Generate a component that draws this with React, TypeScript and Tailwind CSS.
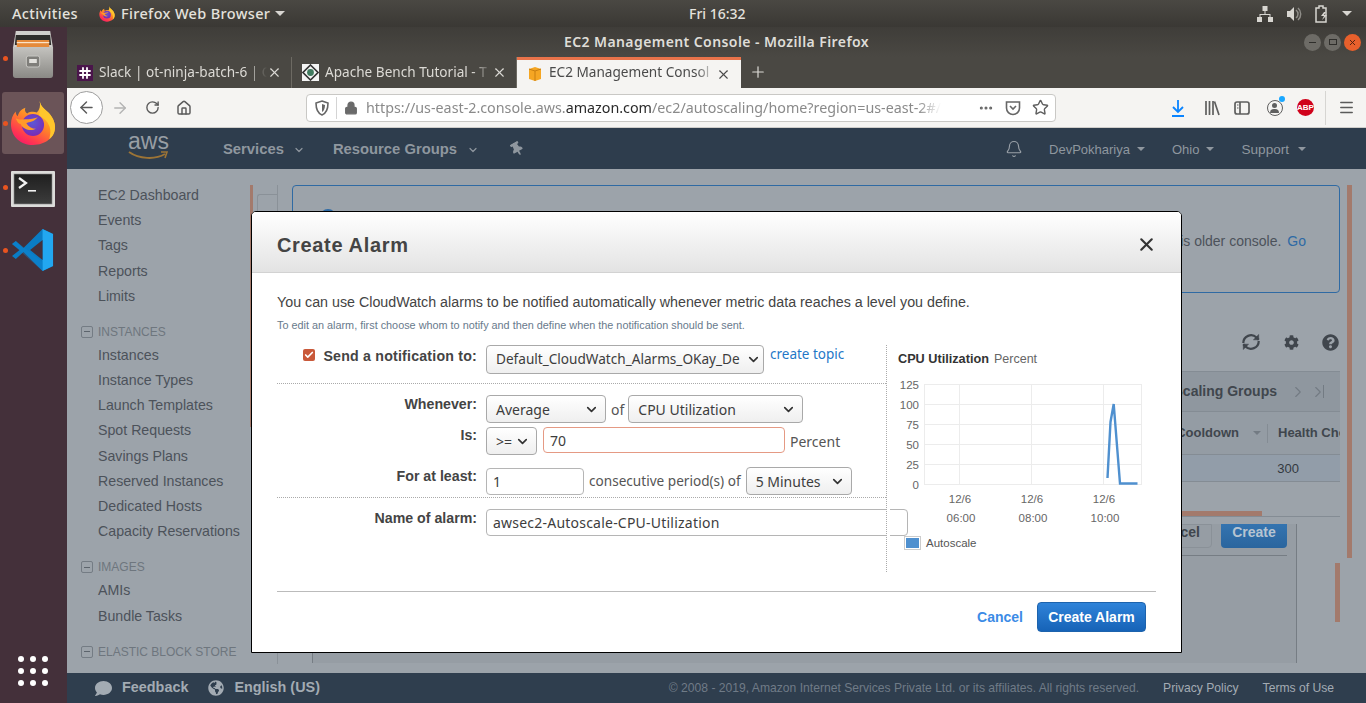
import { ArrowLeft, ArrowRight, RotateCw, House, Star, Ellipsis, Menu, Bell, X, Plus, Lock, ChevronDown, ChevronRight, Check } from 'lucide-react'
import { FaCog, FaQuestionCircle, FaGlobeAmericas, FaComment, FaThumbtack } from 'react-icons/fa'

const ubuntu = "font-['Noto_Sans',sans-serif]"
const arial = "font-['Liberation_Sans',Arial,sans-serif]"

const FirefoxLogo = ({ size }: { size: number }) => (
  <svg width={size} height={size} viewBox="0 0 48 48">
    <defs>
      <linearGradient id="ffa" x1="0.8" y1="0" x2="0.2" y2="1">
        <stop offset="0" stopColor="#ffdf3f" />
        <stop offset="0.45" stopColor="#ff8a25" />
        <stop offset="0.8" stopColor="#ff3850" />
        <stop offset="1" stopColor="#f5156c" />
      </linearGradient>
      <radialGradient id="ffb" cx="0.5" cy="0.4" r="0.6">
        <stop offset="0" stopColor="#5b58d6" />
        <stop offset="1" stopColor="#7a2bb5" />
      </radialGradient>
    </defs>
    <path d="M31 1c1 6 5 8 9 12 4 4 7 10 7 15 0 11-10 19-23 19S1 38 1 25c0-5 2-10 5-13 0 3 1 4 2 5 1-4 3-7 8-9-1 3 0 5 2 6 3-2 7-2 10-1 3-3 4-7 3-12z" fill="url(#ffa)" />
    <path d="M31 1c1 6 5 8 9 12 4 4 7 10 7 15 0 6-2 10-6 13 1-5 2-9 0-14-2-5-6-8-11-11 2-4 2-9 1-15z" fill="#ffc62c" />
    <circle cx="24" cy="26" r="11.5" fill="url(#ffb)" />
    <path d="M6 19c3 2 9 1 13 1 4 0 7-1 10-2-4 5-9 5-12 6 2 4 6 6 10 6-5 3-13 1-16-5-2 0-4-3-5-6z" fill="#ff9a2a" />
  </svg>
)

const FilesIcon = () => (
  <svg width="42" height="50" viewBox="0 0 44 50" preserveAspectRatio="none">
    <defs>
      <linearGradient id="fi" x1="0" y1="0" x2="0" y2="1">
        <stop offset="0" stopColor="#c4c3bf" />
        <stop offset="1" stopColor="#8a8985" />
      </linearGradient>
    </defs>
    <path d="M4 1h36l3 17H1z" fill="#cfcecb" />
    <path d="M4 5h36l1 10H3z" fill="#2e2d2b" />
    <rect x="5" y="10" width="34" height="7" fill="#e58a3a" />
    <rect x="5" y="12" width="34" height="1.2" fill="#fbe3c8" />
    <path d="M1 17h42v28a3 3 0 0 1-3 3H4a3 3 0 0 1-3-3z" fill="url(#fi)" />
    <rect x="15" y="26" width="14" height="11" rx="2" fill="#7f7e7a" stroke="#c9c8c4" />
    <rect x="18" y="29" width="8" height="4" fill="#e2e1dd" />
  </svg>
)

const TerminalIcon = () => (
  <svg width="44" height="36" viewBox="0 0 44 36">
    <defs>
      <linearGradient id="tm" x1="0" y1="0" x2="0" y2="1">
        <stop offset="0" stopColor="#1f1f1f" />
        <stop offset="1" stopColor="#3c3c3c" />
      </linearGradient>
    </defs>
    <rect width="44" height="36" rx="1" fill="#dcdcda" />
    <rect x="3" y="3" width="38" height="30" fill="url(#tm)" stroke="#8a8a8a" strokeWidth="0.6" />
    <path d="M8 7l7 5-7 5" fill="none" stroke="#f2f2f2" strokeWidth="2.2" />
    <rect x="17" y="19" width="8" height="1.6" fill="#f2f2f2" />
  </svg>
)

const VsCodeIcon = () => (
  <svg width="42" height="42" viewBox="0 0 44 42" preserveAspectRatio="none">
    <path d="M32 0l11 5v32l-11 5L12 23 4 30 0 27l8-6-8-6 4-3 8 7z" fill="#0a7cc4" />
    <path d="M32 0l11 5v32l-11 5z" fill="#22a7f0" />
    <path d="M32 11L19 21l13 10z" fill="#44303a" />
    <path d="M4 12l28 21v9L0 15z" fill="#0f8ad6" opacity="0.35" />
  </svg>
)

const SlackFav = () => (
  <svg width="16" height="16" viewBox="0 0 16 16" className="shrink-0">
    <rect width="16" height="16" fill="#4a154b" />
    <path d="M6 3v10M10 3v10M3 6h10M3 10h10" stroke="#fff" strokeWidth="1.8" strokeLinecap="round" />
  </svg>
)

const ApacheFav = () => (
  <svg width="17" height="17" viewBox="0 0 17 17" className="shrink-0">
    <rect width="17" height="17" fill="#f4f4f4" />
    <path d="M8.5 1L16 8.5 8.5 16 1 8.5z" fill="none" stroke="#333" strokeWidth="1.6" />
    <circle cx="8.5" cy="8.5" r="3.4" fill="#3f7a5e" />
  </svg>
)

const AwsFav = () => (
  <svg width="16" height="16" viewBox="0 0 16 16" className="shrink-0">
    <path d="M8 1l6 2v10l-6 2-6-2V3z" fill="#f5a623" />
    <path d="M2 3l6 2 6-2M8 5v10" stroke="#c97f10" strokeWidth="1" fill="none" />
  </svg>
)

const Tab = ({ icon, title, active }: { icon: React.ReactNode; title: string; active?: boolean }) => (
  <div className={active ? 'flex h-[31px] w-[224px] items-center border-t-[3px] border-[#e9734a] bg-[#f5f4f2] pl-[10px] pr-[10px] text-[#4a4a4a]' : 'flex h-[31px] w-[225px] items-center border-r border-[#6d6a63] pl-[10px] pr-[9px] text-[#dcdad5]'}>
    {icon}
    <span className={`${active ? 'mb-[3px]' : 'mb-[1px]'} ml-[6px] w-[168px] whitespace-nowrap text-[13.6px] [mask-image:linear-gradient(to_right,black_88%,transparent)]`}>{title}</span>
    <X size={15} className="ml-auto shrink-0" strokeWidth={1.8} />
  </div>
)

const DockDot = ({ top }: { top: number }) => (
  <span className="absolute left-[3px] h-[5px] w-[5px] rounded-full bg-[#e95420]" style={{ top }} />
)

const Dock = () => (
  <aside className="relative flex w-[67px] shrink-0 flex-col bg-[#44303a]">
    <DockDot top={29} />
    <DockDot top={94} />
    <DockDot top={158} />
    <DockDot top={221} />
    <div className="ml-[12px] mt-[3px]"><FilesIcon /></div>
    <div className="ml-[2px] mt-[12px] flex h-[62px] w-[62px] items-center justify-center rounded-[3px] bg-[#6b5458]"><FirefoxLogo size={46} /></div>
    <div className="ml-[11px] mt-[17px]"><TerminalIcon /></div>
    <div className="ml-[12px] mt-[22px]"><VsCodeIcon /></div>
    <div className="mb-[17px] ml-[18px] mt-auto grid w-[30px] grid-cols-3 gap-x-[6px] gap-y-[6px]">
      {Array.from({ length: 9 }).map((_, i) => <span key={i} className="h-[6px] w-[6px] rounded-full bg-white" />)}
    </div>
  </aside>
)

const TopBar = () => (
  <header className={`${ubuntu} relative flex h-[27px] shrink-0 items-center bg-gradient-to-b from-[#4a4843] to-[#3a3834] text-[14.5px] font-medium tracking-[0.35px] text-[#e4e2dd]`}>
    <span className="ml-[12px]">Activities</span>
    <span className="ml-[21px]"><FirefoxLogo size={16} /></span>
    <span className="ml-[6px]">Firefox Web Browser</span>
    <span className="ml-[5px] h-0 w-0 border-x-[5px] border-t-[5px] border-x-transparent border-t-[#d8d6d1]" />
    <span className="absolute left-[689px] text-[14px] tracking-normal">Fri 16:32</span>
    <div className="ml-auto mr-[14px] flex items-center">
      <svg width="16" height="16" viewBox="0 0 16 16" fill="#d8d6d1"><rect x="5.5" y="0" width="5" height="5" /><rect x="0" y="11" width="5" height="5" /><rect x="11" y="11" width="5" height="5" /><path d="M7.5 5h1v3h5v3h-1V9h-9v2h-1V8h5z" /></svg>
      <svg width="16" height="16" viewBox="0 0 16 16" fill="#d8d6d1" className="ml-[13px]"><path d="M1 5h3l4-4v14l-4-4H1z" /><path d="M10 4a5 5 0 0 1 0 8M12 2a8 8 0 0 1 0 12" fill="none" stroke="#8f8d88" strokeWidth="1.5" /></svg>
      <svg width="14" height="18" viewBox="0 0 14 18" fill="none" className="ml-[13px]"><path d="M1 3h3V1h4v2h3v14H1z" stroke="#d8d6d1" strokeWidth="1.5" /><path d="M9 7l-3 4h3l-2 4 5-5H9l2-3z" fill="#d8d6d1" /></svg>
      <span className="ml-[13px] h-0 w-0 border-x-[5px] border-t-[5px] border-x-transparent border-t-[#d8d6d1]" />
    </div>
  </header>
)

const TitleBar = () => (
  <div className={`${ubuntu} relative flex h-[30px] shrink-0 items-center justify-center bg-gradient-to-b from-[#3f3d39] to-[#4a4843] text-[14px] font-semibold tracking-[0.42px] text-[#dfddd8]`}>
    <span className="mb-[2px]">EC2 Management Console - Mozilla Firefox</span>
    <div className="absolute right-[5px] flex gap-[3px]">
      <span className="flex h-[17px] w-[17px] items-center justify-center rounded-full bg-[#6d6b66]"><span className="h-[1px] w-[7px] bg-[#2f2e2b]" /></span>
      <span className="flex h-[17px] w-[17px] items-center justify-center rounded-full bg-[#6d6b66]"><span className="h-[6px] w-[8px] border border-[#2f2e2b]" /></span>
      <span className="flex h-[17px] w-[17px] items-center justify-center rounded-full bg-[#e8602c]"><X size={9} className="text-[#4a2010]" strokeWidth={2.5} /></span>
    </div>
  </div>
)

const TabBar = () => (
  <div className={`${ubuntu} flex h-[31px] shrink-0 items-end bg-[#4a4843]`}>
    <Tab icon={<SlackFav />} title="Slack | ot-ninja-batch-6 | O" />
    <Tab icon={<ApacheFav />} title="Apache Bench Tutorial - T" />
    <Tab icon={<AwsFav />} title="EC2 Management Consol" active />
    <Plus size={18} strokeWidth={1.6} className="mb-[7px] ml-[8px] text-[#dcdad5]" />
  </div>
)

const Toolbar = () => (
  <div className={`${ubuntu} flex h-[40px] shrink-0 items-center border-b border-[#cfcdca] bg-[#f5f4f2] text-[#5a5a5a]`}>
    <div className="ml-[3px] flex h-[33px] w-[33px] items-center justify-center rounded-full border border-[#9d9d9d] bg-white"><ArrowLeft size={19} strokeWidth={1.8} /></div>
    <ArrowRight size={18} strokeWidth={1.8} className="ml-[8px] text-[#b3b3b3]" />
    <RotateCw size={15} strokeWidth={2.2} className="ml-[16px]" />
    <House size={16} strokeWidth={2.2} className="ml-[16px]" />
    <div className="ml-[114px] flex h-[28px] w-[750px] items-center rounded-[4px] border border-[#c9c8c5] bg-white">
      <svg width="14" height="16" viewBox="0 0 14 16" className="ml-[8px]" fill="none"><path d="M7 1l6 2c0 6-1 10-6 12C2 13 1 9 1 3z" stroke="#666" strokeWidth="1.6" /><path d="M7 4v8c2-1 3-4 3-7z" fill="#666" /></svg>
      <span className="ml-[7px] h-[22px] w-px bg-[#d4d4d4]" />
      <Lock size={14} strokeWidth={2.4} className="ml-[7px] fill-[#6a6a6a] text-[#6a6a6a]" />
      <span className="ml-[8px] whitespace-nowrap text-[14.3px] text-[#8a8a8a] [mask-image:linear-gradient(to_right,black_96%,transparent)]">https://us-east-2.console.aws.<span className="text-[#2a2a2a]">amazon.com</span>/ec2/autoscaling/home?region=us-east-2#/</span>
      <Ellipsis size={16} strokeWidth={2.6} className="ml-auto text-[#666]" />
      <svg width="16" height="16" viewBox="0 0 16 16" fill="none" className="ml-[11px]"><path d="M1.5 2h13v6a6.5 6.5 0 0 1-13 0z" stroke="#666" strokeWidth="1.6" /><path d="M5 6l3 3 3-3" stroke="#666" strokeWidth="1.6" /></svg>
      <Star size={17} strokeWidth={2} className="ml-[11px] mr-[6px] text-[#5f5f5f]" />
    </div>
    <svg width="14" height="18" viewBox="0 0 14 18" fill="none" stroke="#0a84ff" strokeWidth="1.8" className="ml-[115px]"><path d="M7 1v12M2 8l5 5 5-5M1 17h12" /></svg>
    <svg width="16" height="16" viewBox="0 0 16 16" fill="none" stroke="#5f5f5f" strokeWidth="1.7" className="ml-[19px]"><path d="M2 1v14M5.5 1v14M9 1v14M10.5 1.5l4.5 13.5" /></svg>
    <svg width="16" height="14" viewBox="0 0 16 14" fill="none" className="ml-[14px]"><rect x="1" y="1" width="14" height="12" rx="2" stroke="#5f5f5f" strokeWidth="1.7" /><path d="M6 1v12" stroke="#5f5f5f" strokeWidth="1.7" /><path d="M3 4h1.5M3 7h1.5" stroke="#5f5f5f" /></svg>
    <div className="relative ml-[17px] h-[16px] w-[16px] rounded-full border-[1.5px] border-[#5f5f5f]">
      <span className="absolute left-[4px] top-[2px] h-[5px] w-[5px] rounded-full bg-[#5f5f5f]" />
      <span className="absolute left-[2px] top-[8px] h-[4px] w-[9px] rounded-t-full bg-[#5f5f5f]" />
      <span className="absolute -right-[3px] -top-[5px] h-[6px] w-[6px] rounded-full bg-[#1aa7ff]" />
    </div>
    <span className={`${arial} ml-[14px] flex h-[17px] w-[17px] items-center justify-center rounded-full bg-[#d0021b] text-[8px] font-bold text-white`}>ABP</span>
    <span className="ml-[11px] h-[34px] w-px bg-[#d6d5d2]" />
    <Menu size={17} strokeWidth={2.2} className="ml-[12px]" />
  </div>
)

const AwsNav = () => (
  <nav className={`${arial} flex h-[41px] shrink-0 items-center bg-[#2e3d4d] text-[#8f979f]`}>
    <div className="relative ml-[61px] h-[41px] w-[42px]">
      <span className="absolute left-0 top-[0px] text-[23px] leading-[26px] text-[#989ea4]">aws</span>
      <svg width="42" height="10" viewBox="0 0 42 10" fill="none" className="absolute left-0 top-[23px]"><path d="M1 1c10 7 26 8 36 2" stroke="#9c7436" strokeWidth="2" /><path d="M33 1h6l-2 6" stroke="#9c7436" strokeWidth="1.6" /></svg>
    </div>
    <span className="ml-[53px] pt-[1px] text-[14.8px] font-bold">Services</span>
    <ChevronDown size={12} strokeWidth={2.4} className="ml-[9px] mt-[2px]" />
    <span className="ml-[28px] pt-[1px] text-[14.8px] font-bold">Resource Groups</span>
    <ChevronDown size={12} strokeWidth={2.4} className="ml-[10px] mt-[2px]" />
    <FaThumbtack size={14} className="ml-[31px] rotate-[-30deg]" />
    <Bell size={18} strokeWidth={1.5} className="ml-[481px] text-[#9aa1a8]" />
    <span className="ml-[26px] mt-[3px] text-[13px]">DevPokhariya</span>
    <span className="ml-[7px] mt-[1px] h-0 w-0 border-x-[4px] border-t-[4px] border-x-transparent border-t-[#8f979f]" />
    <span className="ml-[27px] mt-[3px] text-[13px]">Ohio</span>
    <span className="ml-[7px] mt-[1px] h-0 w-0 border-x-[4px] border-t-[4px] border-x-transparent border-t-[#8f979f]" />
    <span className="ml-[27px] mt-[3px] text-[13.6px]">Support</span>
    <span className="ml-[9px] mt-[1px] h-0 w-0 border-x-[4px] border-t-[4px] border-x-transparent border-t-[#8f979f]" />
  </nav>
)

const SideItem = ({ label }: { label: string }) => (
  <div className="flex h-[25.2px] items-center pl-[31px] text-[14.2px] whitespace-nowrap text-[#4c525a]">{label}</div>
)

const SideHead = ({ label }: { label: string }) => (
  <div className="mt-[11px] flex h-[23px] items-center pl-[14px] pt-[1px] text-[12px] whitespace-nowrap text-[#6e767e]">
    <span className="mr-[5px] flex h-[12px] w-[12px] items-center justify-center rounded-[2px] border border-[#747c84]"><span className="h-[1px] w-[6px] bg-[#5c646c]" /></span>
    {label}
  </div>
)

const Sidebar = () => (
  <div className="h-full w-[185px] shrink-0 overflow-hidden pt-[14px]">
    {['EC2 Dashboard', 'Events', 'Tags', 'Reports', 'Limits'].map(l => <SideItem key={l} label={l} />)}
    <SideHead label="INSTANCES" />
    {['Instances', 'Instance Types', 'Launch Templates', 'Spot Requests', 'Savings Plans', 'Reserved Instances', 'Dedicated Hosts', 'Capacity Reservations'].map(l => <SideItem key={l} label={l} />)}
    <SideHead label="IMAGES" />
    {['AMIs', 'Bundle Tasks'].map(l => <SideItem key={l} label={l} />)}
    <SideHead label="ELASTIC BLOCK STORE" />
  </div>
)

const MainBehind = () => (
  <div className="flex h-full min-w-0 flex-1 flex-col pb-[10px] pl-[40px] pr-[26px] pt-[16px]">
    <div className="flex h-[108px] shrink-0 items-center justify-end rounded-[4px] border border-[#2f6aa3] pr-[33px] pt-[4px] text-[14px] text-[#4c525a]">
      <span>You are using this older console.</span>
      <span className="ml-[6px] text-[#2d6aa5]">Go</span>
    </div>
    <div className="mt-[39px] flex h-[20px] shrink-0 items-center justify-end text-[#40464d]">
      <svg width="22" height="22" viewBox="0 0 20 20" fill="none" stroke="currentColor" strokeWidth="2"><path d="M3 11a7 7 0 0 1 12-5l2 2M17 9a7 7 0 0 1-12 5l-2-2" /><path d="M17 3v5h-5M3 17v-5h5" fill="currentColor" strokeWidth="0.5" /></svg>
      <FaCog size={15} className="ml-[22px]" />
      <FaQuestionCircle size={17} className="ml-[23px] mr-[1px]" />
    </div>
    <div className="mt-[19px] flex h-[41px] shrink-0 items-center justify-end border-y border-[#848c94] bg-[#8f979f] pr-[16px] text-[14px] font-bold text-[#40464d]">
      <span>Auto Scaling Groups</span>
      <ChevronRight size={18} strokeWidth={1.5} className="ml-[12px] text-[#737b83]" />
      <ChevronRight size={18} strokeWidth={1.5} className="ml-[2px] text-[#737b83]" />
      <span className="ml-[-4px] h-[13px] w-px bg-[#737b83]" />
    </div>
    <div className="flex h-[43px] shrink-0 items-center justify-end overflow-hidden border-b border-[#848c94] bg-[#949ca4] text-[13px] font-bold text-[#40464d]">
      <span>Default Cooldown</span>
      <span className="ml-[14px] h-0 w-0 border-x-[4px] border-t-[4px] border-x-transparent border-t-[#737b83]" />
      <span className="ml-[6px] h-[19px] w-px bg-[#848c94]" />
      <span className="ml-[10px] w-[62px] shrink-0 whitespace-nowrap">Health Che</span>
    </div>
    <div className="flex h-[27px] shrink-0 items-center justify-end border-b border-[#848c94] bg-[#929da9] pr-[41px] pt-[2px] text-[13px] text-[#333940]">300</div>
    <div className="mt-[29px] h-[5px] w-[970px] shrink-0 self-start bg-[#a37a6c]" />
    <div className="h-px shrink-0 bg-[#848c94]" />
    <div className="ml-[20px] mr-[43px] mt-[7px] min-h-0 flex-1 border-x border-[#767d84] bg-[#969da4] pl-[20px] pr-[9px]">
      <div className="flex h-[32px] items-start justify-end border-b border-[#767d84] text-[14px] font-bold">
        <span className="flex h-[24px] w-[70px] items-center justify-center rounded-b-[4px] border border-[#8a9198] pb-[8px] text-[#40464d]">Cancel</span>
        <span className="ml-[9px] flex h-[24px] w-[66px] items-center justify-center rounded-b-[4px] bg-gradient-to-b from-[#3474b0] to-[#2a659e] pb-[8px] text-[#b7c4d1]">Create</span>
      </div>
    </div>
  </div>
)

const Sel = ({ w, label, cls, tight }: { w: number; label: string; cls: string; tight?: boolean }) => (
  <div style={{ width: w }} className={`${ubuntu} ${cls} ${tight ? 'pr-[2px] text-[13.6px]' : 'pr-[6px] text-[14px]'} flex shrink-0 items-center overflow-hidden rounded-[4px] border border-[#a9a9a9] bg-gradient-to-b from-white to-[#efefef] pl-[9px] text-[#3d3d3d]`}>
    <span className="min-w-0 flex-1 whitespace-nowrap">{label}</span>
    <ChevronDown size={15} strokeWidth={2.6} className="ml-[1px] shrink-0 text-[#333]" />
  </div>
)

const Label = ({ text, cls }: { text: string; cls: string }) => (
  <div className={`${cls} w-[200px] shrink-0 text-right text-[14.2px] leading-[16px] font-bold text-[#444]`}>{text}</div>
)

const Chart = () => (
  <svg width="270" height="227" viewBox="886 345 270 227" className="shrink-0">
    {[384.5, 404.5, 424.5, 444.5, 464.5, 484.5].map(y => <line key={y} x1="924" x2="1142" y1={y} y2={y} stroke="#ececec" />)}
    {[924.5, 959.5, 1031.5, 1103.5, 1141.5].map(x => <line key={x} x1={x} x2={x} y1="384" y2="484" stroke="#ececec" />)}
    <g fontFamily="Liberation Sans" fontSize="11.5" fill="#666" textAnchor="end">
      {['125', '100', '75', '50', '25', '0'].map((t, i) => <text key={t} x="919" y={389 + i * 19.9}>{t}</text>)}
    </g>
    <g fontFamily="Liberation Sans" fontSize="11.5" fill="#666" textAnchor="middle">
      {[960, 1032, 1104].map(x => <text key={x} x={x} y="503">12/6</text>)}
      {[['06:00', 961], ['08:00', 1033], ['10:00', 1105]].map(([t, x]) => <text key={t} x={x} y="522">{t}</text>)}
    </g>
    <polyline points="1107.5,478 1110.5,422 1113.7,404 1120,483.5 1137.5,483.5" fill="none" stroke="#4f90cf" strokeWidth="2.4" />
    <rect x="904.5" y="536.5" width="16" height="13" fill="#fff" stroke="#ccc" />
    <rect x="906" y="538" width="13" height="10" fill="#4f90cf" />
    <text x="926" y="547" fontFamily="Liberation Sans" fontSize="11.5" fill="#555">Autoscale</text>
    <text x="898" y="363" fontFamily="Liberation Sans" fontSize="12.7" fontWeight="bold" fill="#333">CPU Utilization</text>
    <text x="994" y="363" fontFamily="Liberation Sans" fontSize="12.5" fill="#666">Percent</text>
  </svg>
)

const AlarmModal = () => (
  <div className={`${arial} absolute left-[251px] top-[211px] h-[442px] w-[931px] overflow-hidden rounded-t-[5px] border border-black bg-white`}>
    <div className="flex h-[61px] items-center justify-between border-b border-[#d2d2d2] bg-gradient-to-b from-white to-[#e3e3e3] pl-[25px] pr-[24px] pt-[5px]">
      <span className="text-[20px] font-bold tracking-[0.65px] text-[#444]">Create Alarm</span>
      <X size={21} strokeWidth={2.4} className="text-[#333]" />
    </div>
    <div className="px-[25px] pt-[19px]">
      <p className="text-[14.27px] leading-[20px] text-[#444]">You can use CloudWatch alarms to be notified automatically whenever metric data reaches a level you define.</p>
      <p className="mt-[5px] text-[10.85px] leading-[16px] text-[#687a8c]">To edit an alarm, first choose whom to notify and then define when the notification should be sent.</p>
      <div className="relative mt-[12px] flex h-[227px]">
        <div className="w-[609px] shrink-0 text-[14px] text-[#555]">
          <div className="flex h-[39px] gap-[9px] border-b border-dotted border-[#aaa]">
            <div className="flex w-[200px] shrink-0 justify-end gap-[8px] pt-[3px] text-[14.2px] leading-[16px] font-bold tracking-[0.2px] text-[#444]">
              <span className="mt-[1px] flex h-[12px] w-[12px] items-center justify-center rounded-[2px] bg-[#c9593a]"><Check size={10} strokeWidth={4} className="text-white" /></span>
              <span>Send a notification to:</span>
            </div>
            <Sel w={278} label="Default_CloudWatch_Alarms_OKay_De" cls="h-[29px]" tight />
            <span className={`${ubuntu} ml-[-3px] mt-[-1px] text-[13.5px] text-[#1f78c8]`}>create topic</span>
          </div>
          <div className="h-[114px] border-b border-dotted border-[#aaa] pt-[11px]">
            <div className="flex h-[28px] gap-[9px]">
              <Label text="Whenever:" cls="pt-[1px]" />
              <Sel w={120} label="Average" cls="h-[28px]" />
              <span className={`${ubuntu} ml-[-4px] self-center`}>of</span>
              <Sel w={175} label="CPU Utilization" cls="ml-[-5px] h-[28px]" />
            </div>
            <div className="mt-[4px] flex h-[28px] gap-[9px]">
              <Label text="Is:" cls="" />
              <Sel w={51} label=">=" cls="h-[28px]" />
              <div className={`${ubuntu} ml-[-3px] flex h-[26px] w-[242px] items-center rounded-[4px] border border-[#e59a84] pl-[6px] text-[14px] text-[#3d3d3d]`}>70</div>
              <span className={`${ubuntu} ml-[-4px] self-center`}>Percent</span>
            </div>
            <div className="mt-[12px] flex h-[28px] gap-[9px]">
              <Label text="For at least:" cls="mt-[1px]" />
              <div className={`${ubuntu} mt-[1px] flex h-[27px] w-[98px] items-center rounded-[4px] border border-[#b5b5b5] pl-[6px] text-[14px] text-[#3d3d3d]`}>1</div>
              <span className={`${ubuntu} ml-[-4px] self-center pt-[1px] text-[13.6px]`}>consecutive period(s) of</span>
              <Sel w={106} label="5 Minutes" cls="ml-[-4px] h-[28px]" />
            </div>
          </div>
          <div className="flex gap-[9px] pt-[11px]">
            <Label text="Name of alarm:" cls="pt-[1px]" />
            <div className={`${ubuntu} flex h-[27px] w-[422px] shrink-0 items-center rounded-[4px] border border-[#b5b5b5] pl-[6px] text-[14px] tracking-[0.22px] text-[#3d3d3d]`}>awsec2-Autoscale-CPU-Utilization</div>
          </div>
        </div>
        <div className="absolute left-[609px] top-0 h-full w-[4px] border-l border-dotted border-[#aaa] bg-white" />
        <div className="absolute left-[609px] top-0"><Chart /></div>
      </div>
    </div>
    <div className="mx-[25px] mt-[19px] flex items-center justify-end border-t border-[#bbb] pt-[10px] pr-[10px]">
      <span className="text-[14px] font-bold text-[#3b8be6]">Cancel</span>
      <span className="ml-[14px] flex h-[30px] w-[109px] items-center justify-center rounded-[4px] border border-[#1d63ad] bg-gradient-to-b from-[#2f83d9] to-[#1663b7] text-[14px] font-bold text-white">Create Alarm</span>
    </div>
  </div>
)

const FooterBar = () => (
  <footer className={`${arial} flex h-[30px] shrink-0 items-center bg-[#2f3e4e] text-[12.13px] text-[#6f7b87]`}>
    <FaComment size={17} className="ml-[28px] text-[#a3abb3]" />
    <span className="ml-[10px] text-[14.4px] font-bold text-[#a3abb3]">Feedback</span>
    <FaGlobeAmericas size={16} className="ml-[20px] text-[#a3abb3]" />
    <span className="ml-[10px] text-[14.4px] font-bold text-[#a3abb3]">English (US)</span>
    <span className="ml-auto">© 2008 - 2019, Amazon Internet Services Private Ltd. or its affiliates. All rights reserved.</span>
    <span className="ml-[24px] text-[#a3abb3]">Privacy Policy</span>
    <span className="ml-[24px] mr-[32px] text-[#a3abb3]">Terms of Use</span>
  </footer>
)

export default function App() {
  return (
    <div className={`${arial} relative flex h-[703px] w-[1366px] flex-col overflow-hidden`}>
      <TopBar />
      <div className="flex min-h-0 flex-1">
        <Dock />
        <div className="flex min-w-0 flex-1 flex-col">
          <TitleBar />
          <TabBar />
          <Toolbar />
          <AwsNav />
          <div className="flex min-h-0 flex-1 bg-[#9ca3aa]">
            <Sidebar />
            <MainBehind />
          </div>
          <FooterBar />
        </div>
      </div>
      {/* bits of the page poking out round the modal, dimmed by its backdrop */}
      <span className="absolute left-[250px] top-[185px] h-[242px] w-[3px] bg-[#a37a6c]" />
      <span className="absolute left-[1347px] top-[185px] h-[373px] w-[5px] bg-[#a37a6c]" />
      <span className="absolute left-[1335px] top-[563px] h-[59px] w-[5px] bg-[#a37a6c]" />
      <span className="absolute left-[257px] top-[194px] h-[18px] w-[21px] rounded-tl-[3px] border-l border-t border-[#8a9198]" />
      <span className="absolute left-[277px] top-[185px] h-[479px] w-px bg-[#8a9198]" />
      <span className="absolute left-[320px] top-[209px] h-[16px] w-[16px] rounded-full bg-[#2d6aa5]" />
      <AlarmModal />
    </div>
  )
}
